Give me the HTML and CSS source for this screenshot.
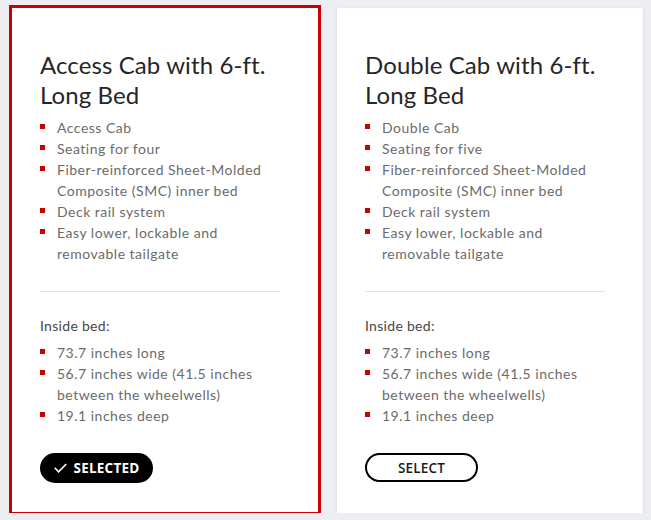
FILE: index.html
```html
<!DOCTYPE html>
<html>
<head>
<meta charset="utf-8">
<link rel="stylesheet" href="styles.css">
</head>
<body>
<div class="cards">
  <div class="card card-selected">
    <h2 class="title">Access Cab with 6-ft. Long Bed</h2>
    <ul class="list">
      <li>Access Cab</li>
      <li>Seating for four</li>
      <li>Fiber-reinforced Sheet-Molded Composite (SMC) inner bed</li>
      <li>Deck rail system</li>
      <li>Easy lower, lockable and removable tailgate</li>
    </ul>
    <hr class="divider">
    <p class="sub">Inside bed:</p>
    <ul class="list list-bed">
      <li>73.7 inches long</li>
      <li>56.7 inches wide (41.5 inches between the wheelwells)</li>
      <li>19.1 inches deep</li>
    </ul>
    <button class="btn btn-selected"><svg class="check" width="13" height="10" viewBox="0 0 13 10"><polyline points="0.8,4.8 4.6,8.8 12.2,1" fill="none" stroke="#fff" stroke-width="1.6"/></svg>SELECTED</button>
  </div>
  <div class="card">
    <h2 class="title">Double Cab with 6-ft. Long Bed</h2>
    <ul class="list">
      <li>Double Cab</li>
      <li>Seating for five</li>
      <li>Fiber-reinforced Sheet-Molded Composite (SMC) inner bed</li>
      <li>Deck rail system</li>
      <li>Easy lower, lockable and removable tailgate</li>
    </ul>
    <hr class="divider">
    <p class="sub">Inside bed:</p>
    <ul class="list list-bed">
      <li>73.7 inches long</li>
      <li>56.7 inches wide (41.5 inches between the wheelwells)</li>
      <li>19.1 inches deep</li>
    </ul>
    <button class="btn btn-select">SELECT</button>
  </div>
</div>
</body>
</html>
```
FILE: styles.css
```css
html, body {
  margin: 0;
  padding: 0;
  background: #eceef2;
  font-family: "Lato", "Open Sans", sans-serif;
}
.cards {
  display: flex;
  align-items: flex-start;
  gap: 19px;
  padding: 8px 0 0 12px;
}
.card {
  box-sizing: border-box;
  width: 306px;
  height: 505px;
  background: #fff;
  padding: 42px 38px 0 28px;
  box-shadow: 0 1px 3px rgba(0,0,0,0.12);
}
.card-selected {
  outline: 3px solid #cc0000;
  height: 504px;
  box-shadow: none;
}
.title {
  margin: 0;
  font-family: "Lato", sans-serif;
  font-weight: 400;
  font-size: 24px;
  letter-spacing: 0.1px;
  line-height: 30px;
  color: #262626;
}
.list {
  list-style: none;
  margin: 7px 0 0 0;
  padding: 0;
  font-size: 14px;
  letter-spacing: 0.5px;
  line-height: 21px;
  color: #6b6b6b;
}
.list li {
  position: relative;
  padding-left: 17px;
}
.list li::before {
  content: "";
  position: absolute;
  left: 0;
  top: 7px;
  width: 5px;
  height: 5px;
  background: #cc0000;
}
.divider {
  border: 0;
  border-top: 1px solid #e2e2e2;
  margin: 27px 0 0 0;
}
.sub {
  margin: 23px 0 0 0;
  font-size: 14px;
  letter-spacing: 0.3px;
  line-height: 21px;
  color: #474747;
}
.list-bed {
  margin-top: 6px;
}
.btn {
  box-sizing: border-box;
  margin-top: 27px;
  width: 113px;
  height: 30px;
  border-radius: 15px;
  font-family: "Open Sans", sans-serif;
  font-size: 13.5px;
  letter-spacing: 0.2px;
  display: flex;
  align-items: center;
  justify-content: center;
  gap: 7px;
  padding: 0;
  cursor: pointer;
}
.btn-selected {
  background: #000;
  color: #fff;
  border: none;
  font-weight: 700;
}
.btn-select {
  background: #fff;
  color: #1a1a1a;
  border: 2px solid #000;
  font-weight: 600;
  height: 29px;
}
.check {
  display: block;
}
```
